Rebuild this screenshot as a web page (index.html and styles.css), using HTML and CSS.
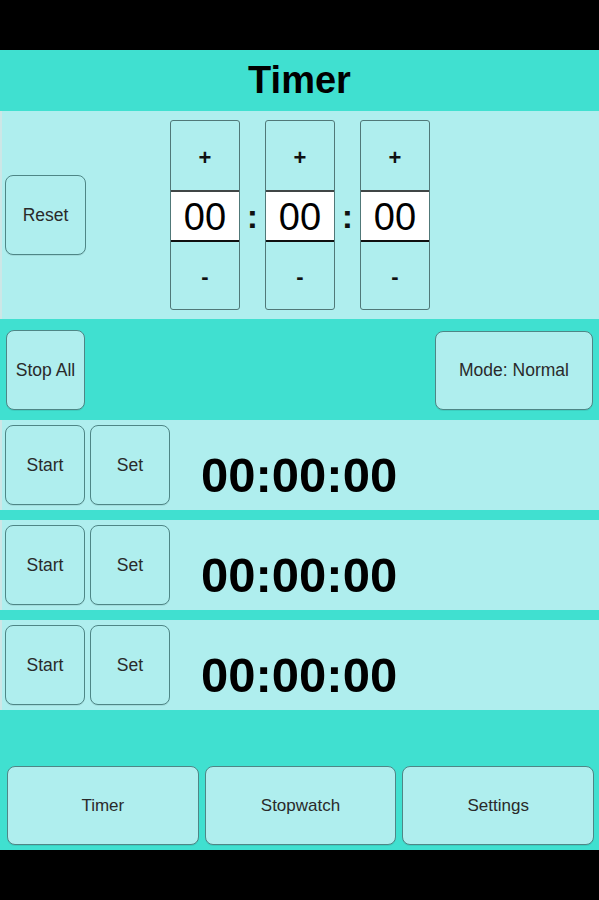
FILE: index.html
```html
<!DOCTYPE html>
<html>
<head>
<meta charset="utf-8">
<link rel="stylesheet" href="styles.css">
</head>
<body>
<div class="app">
  <header class="title-bar"><h1 class="title">Timer</h1></header>

  <section class="panel set-panel">
    <button class="btn btn-sq">Reset</button>
    <div class="spinners">
      <div class="spin">
        <div class="spin-btn plus">+</div>
        <div class="spin-val">00</div>
        <div class="spin-btn minus">-</div>
      </div>
      <div class="colon">:</div>
      <div class="spin">
        <div class="spin-btn plus">+</div>
        <div class="spin-val">00</div>
        <div class="spin-btn minus">-</div>
      </div>
      <div class="colon">:</div>
      <div class="spin">
        <div class="spin-btn plus">+</div>
        <div class="spin-val">00</div>
        <div class="spin-btn minus">-</div>
      </div>
    </div>
  </section>

  <section class="control-row">
    <button class="btn btn-sq">Stop All</button>
    <button class="btn btn-mode">Mode: Normal</button>
  </section>

  <div class="timers">
    <section class="panel timer-row">
      <button class="btn btn-sq">Start</button>
      <button class="btn btn-sq">Set</button>
      <div class="time">00:00:00</div>
    </section>
    <section class="panel timer-row">
      <button class="btn btn-sq">Start</button>
      <button class="btn btn-sq">Set</button>
      <div class="time">00:00:00</div>
    </section>
    <section class="panel timer-row">
      <button class="btn btn-sq">Start</button>
      <button class="btn btn-sq">Set</button>
      <div class="time">00:00:00</div>
    </section>
  </div>

  <nav class="tabbar">
    <button class="btn btn-tab">Timer</button>
    <button class="btn btn-tab">Stopwatch</button>
    <button class="btn btn-tab">Settings</button>
  </nav>
</div>
</body>
</html>
```

FILE: styles.css
```css
* { box-sizing: border-box; }
html, body { margin: 0; padding: 0; }
body {
  background: #000;
  width: 599px;
  height: 900px;
  font-family: "Liberation Sans", Arial, Helvetica, sans-serif;
  color: #1e1e1e;
}
.app {
  margin-top: 50px;
  height: 800px;
  background: #40e0d0;
  display: flex;
  flex-direction: column;
}
.title-bar {
  height: 61px;
  display: flex;
  align-items: center;
  justify-content: center;
}
.title {
  margin: 0;
  font-size: 38px;
  font-weight: bold;
  color: #000;
  line-height: 1;
  padding-bottom: 2px;
}
.panel {
  background: #afeeee;
  border-left: 2px solid #cde6e6;
}
.btn {
  font-family: "Liberation Sans", Arial, Helvetica, sans-serif;
  font-size: 17.5px;
  color: #2a2a2a;
  background: #afeeee;
  border: 1px solid #4e8686;
  border-radius: 8px;
  padding: 0;
  margin: 0;
  box-shadow: 0 1px 0 rgba(0,0,0,0.08);
}
.btn-sq {
  width: 80px;
  height: 80px;
}
.set-panel {
  height: 208px;
  display: flex;
  align-items: center;
  padding-left: 3px;
}
.set-panel .btn-sq { width: 81px; }
.spinners {
  display: flex;
  align-items: center;
  margin-left: 84px;
}
.spin {
  width: 70px;
  height: 190px;
  border: 1px solid #507878;
  border-radius: 3px;
  background: #afeeee;
  display: flex;
  flex-direction: column;
  overflow: hidden;
}
.spin-btn {
  display: flex;
  align-items: center;
  justify-content: center;
  font-size: 22px;
  font-weight: bold;
  color: #111;
}
.spin-btn.plus { height: 69px; padding-top: 4px; }
.spin-btn.minus { height: 67px; padding-top: 2px; }
.spin-val {
  height: 52px;
  background: #fff;
  border-top: 2px solid #404646;
  border-bottom: 2px solid #111;
  display: flex;
  align-items: center;
  justify-content: center;
  font-size: 38px;
  color: #000;
  padding-top: 3px;
}
.colon {
  width: 25px;
  text-align: center;
  font-size: 34px;
  font-weight: bold;
  color: #111;
  padding-top: 2px;
}
.control-row {
  height: 101px;
  display: flex;
  align-items: center;
  justify-content: space-between;
  padding: 0 6px 0 6px;
}
.control-row .btn-sq { width: 79px; margin-top: 1px; }
.btn-mode {
  width: 158px;
  height: 79px;
  margin-top: 1px;
}
.timers {
  display: flex;
  flex-direction: column;
  gap: 10px;
}
.timer-row {
  height: 90px;
  display: flex;
  align-items: center;
  gap: 5px;
  padding-left: 3px;
}
.time {
  margin-left: 26px;
  font-size: 49px;
  font-weight: bold;
  color: #000;
  padding-top: 20px;
}
.tabbar {
  margin-top: auto;
  display: flex;
  gap: 6px;
  padding: 0 5px 5px 7px;
}
.btn-tab {
  flex: 1;
  height: 79px;
  font-size: 17px;
}
```
